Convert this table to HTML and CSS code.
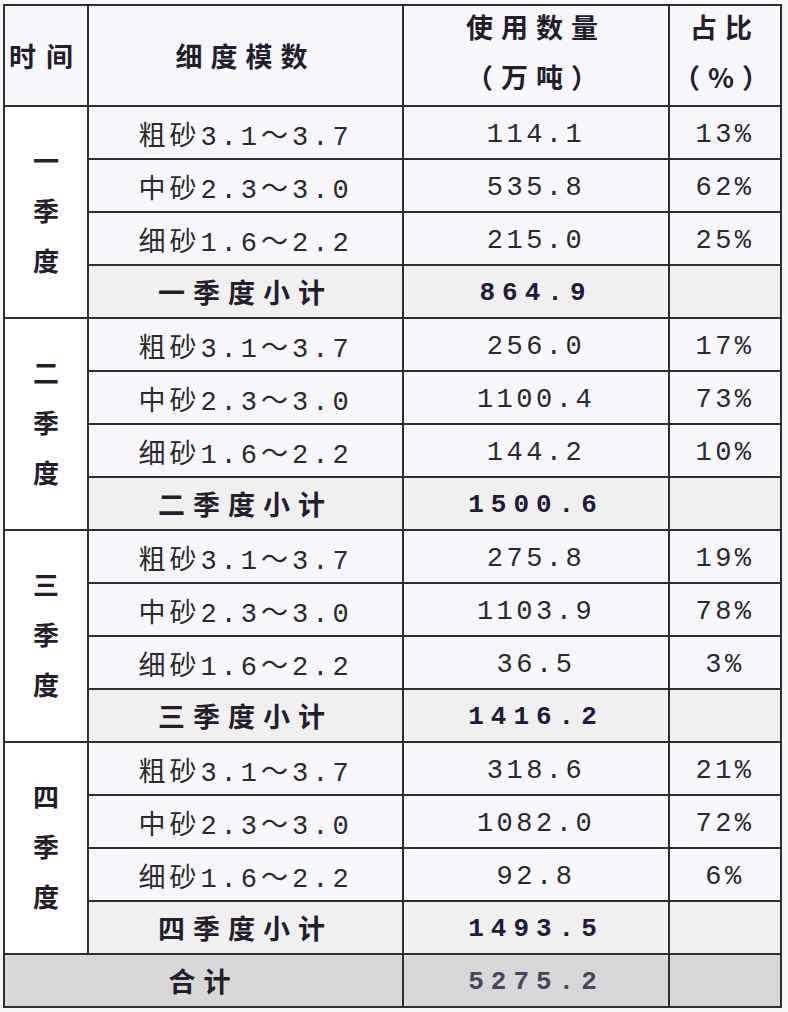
FILE: index.html
```html
<!DOCTYPE html>
<html lang="zh-CN">
<head>
<meta charset="utf-8">
<title>河砂使用数量统计</title>
<link rel="stylesheet" href="styles.css">
</head>
<body>
<div class="sheet">
  <div class="cell head time">时间</div>
  <div class="cell head">细度模数</div>
  <div class="cell head two">使用数量<br>（万吨）</div>
  <div class="cell head two">占比<br>（%）</div>

  <div class="cell season"><span class="stack">一季度</span></div>
  <div class="cell label">粗砂3.1～3.7</div><div class="cell num">114.1</div><div class="cell pct">13%</div>
  <div class="cell label">中砂2.3～3.0</div><div class="cell num">535.8</div><div class="cell pct">62%</div>
  <div class="cell label">细砂1.6～2.2</div><div class="cell num">215.0</div><div class="cell pct">25%</div>
  <div class="cell sub sublabel">一季度小计</div><div class="cell sub subnum">864.9</div><div class="cell sub"></div>

  <div class="cell season"><span class="stack">二季度</span></div>
  <div class="cell label">粗砂3.1～3.7</div><div class="cell num">256.0</div><div class="cell pct">17%</div>
  <div class="cell label">中砂2.3～3.0</div><div class="cell num">1100.4</div><div class="cell pct">73%</div>
  <div class="cell label">细砂1.6～2.2</div><div class="cell num">144.2</div><div class="cell pct">10%</div>
  <div class="cell sub sublabel">二季度小计</div><div class="cell sub subnum">1500.6</div><div class="cell sub"></div>

  <div class="cell season"><span class="stack">三季度</span></div>
  <div class="cell label">粗砂3.1～3.7</div><div class="cell num">275.8</div><div class="cell pct">19%</div>
  <div class="cell label">中砂2.3～3.0</div><div class="cell num">1103.9</div><div class="cell pct">78%</div>
  <div class="cell label">细砂1.6～2.2</div><div class="cell num">36.5</div><div class="cell pct">3%</div>
  <div class="cell sub sublabel">三季度小计</div><div class="cell sub subnum">1416.2</div><div class="cell sub"></div>

  <div class="cell season"><span class="stack">四季度</span></div>
  <div class="cell label">粗砂3.1～3.7</div><div class="cell num">318.6</div><div class="cell pct">21%</div>
  <div class="cell label">中砂2.3～3.0</div><div class="cell num">1082.0</div><div class="cell pct">72%</div>
  <div class="cell label">细砂1.6～2.2</div><div class="cell num">92.8</div><div class="cell pct">6%</div>
  <div class="cell sub sublabel">四季度小计</div><div class="cell sub subnum">1493.5</div><div class="cell sub"></div>

  <div class="cell total totallabel">合计</div><div class="cell total totalnum">5275.2</div><div class="cell total"></div>
</div>
</body>
</html>
```

FILE: styles.css
```css
html, body {
  margin: 0;
  padding: 0;
  background: #f6f6f8;
}

.sheet {
  display: grid;
  grid-template-columns: 82px 313px 264px 110px;
  grid-template-rows: 99px repeat(17, 51px);
  gap: 2px;
  padding: 2px;
  background: #2f2f2f;
  width: fit-content;
  margin: 4px 0 0 3px;
}

.cell {
  background: #f8f8fc;
  display: flex;
  align-items: center;
  justify-content: center;
  text-align: center;
  color: #2a2a2a;
  font-family: "Liberation Mono", "Noto Sans CJK SC", monospace;
  font-size: 27px;
  white-space: nowrap;
}

.head {
  font-family: "Noto Sans CJK SC", sans-serif;
  font-weight: 700;
  font-size: 27px;
  letter-spacing: 8px;
  line-height: 50px;
  color: #231d2c;
}

.head.time {
  letter-spacing: 10px;
}

.head.two {
  padding-bottom: 8px;
}

.season {
  grid-row: span 4;
  background: #ffffff;
  font-family: "Noto Sans CJK SC", sans-serif;
  font-weight: 700;
  font-size: 26px;
  color: #231d2c;
}

.stack {
  display: block;
  width: 1em;
  white-space: normal;
  line-height: 50px;
  padding-bottom: 4px;
}

.label {
  letter-spacing: 4px;
  padding-top: 2px;
}

.num,
.pct {
  letter-spacing: 3.5px;
  padding-top: 4px;
}

.sub {
  background: #f0f0f0;
}

.sublabel {
  font-family: "Noto Sans CJK SC", sans-serif;
  font-weight: 700;
  font-size: 27px;
  letter-spacing: 8px;
  color: #231d2c;
}

.subnum {
  font-weight: 700;
  font-size: 26px;
  letter-spacing: 7px;
  color: #241a38;
  padding-top: 2px;
}

.total {
  background: #d8d8d8;
}

.totallabel {
  grid-column: span 2;
  font-family: "Noto Sans CJK SC", sans-serif;
  font-weight: 700;
  font-size: 27px;
  letter-spacing: 8px;
  color: #231d2c;
}

.totalnum {
  font-weight: 700;
  font-size: 26px;
  letter-spacing: 7px;
  color: #4a4560;
  padding-top: 2px;
}
```
